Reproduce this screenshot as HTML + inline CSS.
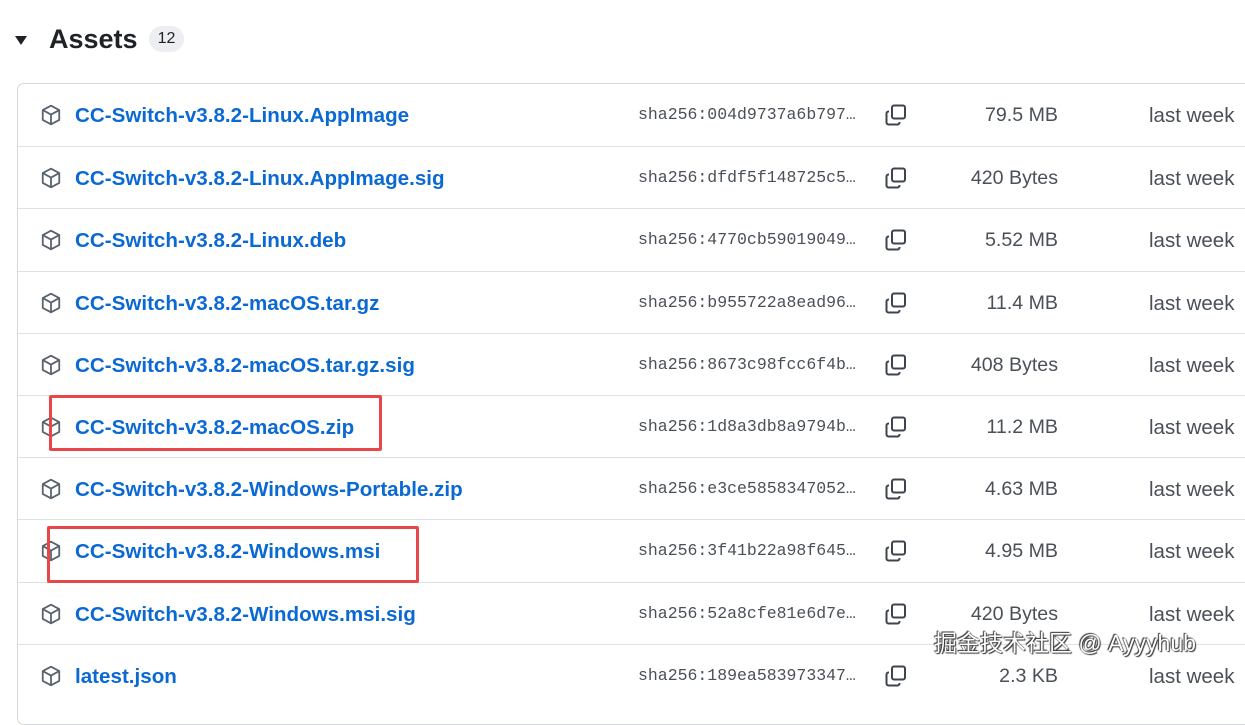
<!DOCTYPE html>
<html><head><meta charset="utf-8"><style>
body{margin:0;width:1245px;height:674px;overflow:hidden;background:#fff;font-family:"Liberation Sans",sans-serif;position:relative}
.hdr{position:absolute;left:15px;top:22px;height:34px;display:flex;align-items:center}
.tri{width:0;height:0;border-left:6px solid transparent;border-right:6px solid transparent;border-top:9px solid #1f2328;margin-right:22px;margin-top:2px}
.ttl{font-size:27px;font-weight:bold;color:#1f2328}
.cnt{margin-left:11px;background:#eceef1;border-radius:14px;font-size:16px;color:#1f2328;padding:4px 9px}
.box{position:absolute;left:17px;top:83px;width:1260px;height:640px;border:1px solid #d6d9dd;border-radius:7px}
.row{position:absolute;left:18px;width:1240px;height:62px;border-top:1px solid #dfe2e5}
.row svg.pk{position:absolute;left:22px;top:20px}
.nm{position:absolute;left:57px;top:20px;font-size:20.6px;font-weight:bold;color:#0b69d4}
.sh{position:absolute;left:620px;top:21px;font-family:"Liberation Mono",monospace;font-size:16.5px;color:#4a5057}
.cp{position:absolute;left:866px;top:19px}
.sz{position:absolute;right:200px;top:20px;font-size:19.6px;color:#4a5057;text-align:right}
.lw{position:absolute;left:1131px;top:20px;font-size:20.5px;color:#4a5057}
.red{position:absolute;border:3px solid #e8474a;border-radius:2px}
.wm{position:absolute;left:934px;top:624px;font-size:23px;color:#fff;font-family:"Liberation Sans","Noto Sans CJK SC",sans-serif;text-shadow:0 0 1px #333,1px 1px 1px #333,-1px -1px 1px #333}
</style></head><body>
<div class="hdr"><div class="tri"></div><div class="ttl">Assets</div><div class="cnt">12</div></div>
<div class="box"></div>
<div id="rows"></div>
<script>
var d=[["CC-Switch-v3.8.2-Linux.AppImage","004d9737a6b797","79.5 MB"],["CC-Switch-v3.8.2-Linux.AppImage.sig","dfdf5f148725c5","420 Bytes"],["CC-Switch-v3.8.2-Linux.deb","4770cb59019049","5.52 MB"],["CC-Switch-v3.8.2-macOS.tar.gz","b955722a8ead96","11.4 MB"],["CC-Switch-v3.8.2-macOS.tar.gz.sig","8673c98fcc6f4b","408 Bytes"],["CC-Switch-v3.8.2-macOS.zip","1d8a3db8a9794b","11.2 MB"],["CC-Switch-v3.8.2-Windows-Portable.zip","e3ce5858347052","4.63 MB"],["CC-Switch-v3.8.2-Windows.msi","3f41b22a98f645","4.95 MB"],["CC-Switch-v3.8.2-Windows.msi.sig","52a8cfe81e6d7e","420 Bytes"],["latest.json","189ea583973347","2.3 KB"]];
var h="";
d.forEach(function(r,i){var t=84+i*62.2;
h+='<div class="row" style="top:'+t+'px;'+(i==0?'border-top:none':'')+'"><svg class="pk" width="22" height="22" viewBox="0 0 16 16"><path d="M8 1.2l6 3.2v7.2L8 14.8 2 11.6V4.4z M2 4.4l6 3.3 6-3.3 M8 7.7v7.1" fill="none" stroke="#59636e" stroke-width="1.3" stroke-linejoin="round"/></svg><span class="nm">'+r[0]+'</span><span class="sh">sha256:'+r[1]+'…</span><svg class="cp" width="24" height="24" viewBox="0 0 24 24"><rect x="8" y="2.5" width="13" height="13" rx="2" fill="none" stroke="#3d444d" stroke-width="2"/><path d="M5 8.5H4.5A2 2 0 0 0 2.5 10.5v9a2 2 0 0 0 2 2h9a2 2 0 0 0 2-2V19" fill="none" stroke="#3d444d" stroke-width="2"/></svg><span class="sz">'+r[2]+'</span><span class="lw">last week</span></div>';});
document.getElementById("rows").innerHTML=h;
</script>
<div class="red" style="left:49px;top:395px;width:327px;height:50px"></div>
<div class="red" style="left:47px;top:526px;width:366px;height:51px"></div>
<div class="wm">掘金技术社区 @ Ayyyhub</div>
</body></html>
